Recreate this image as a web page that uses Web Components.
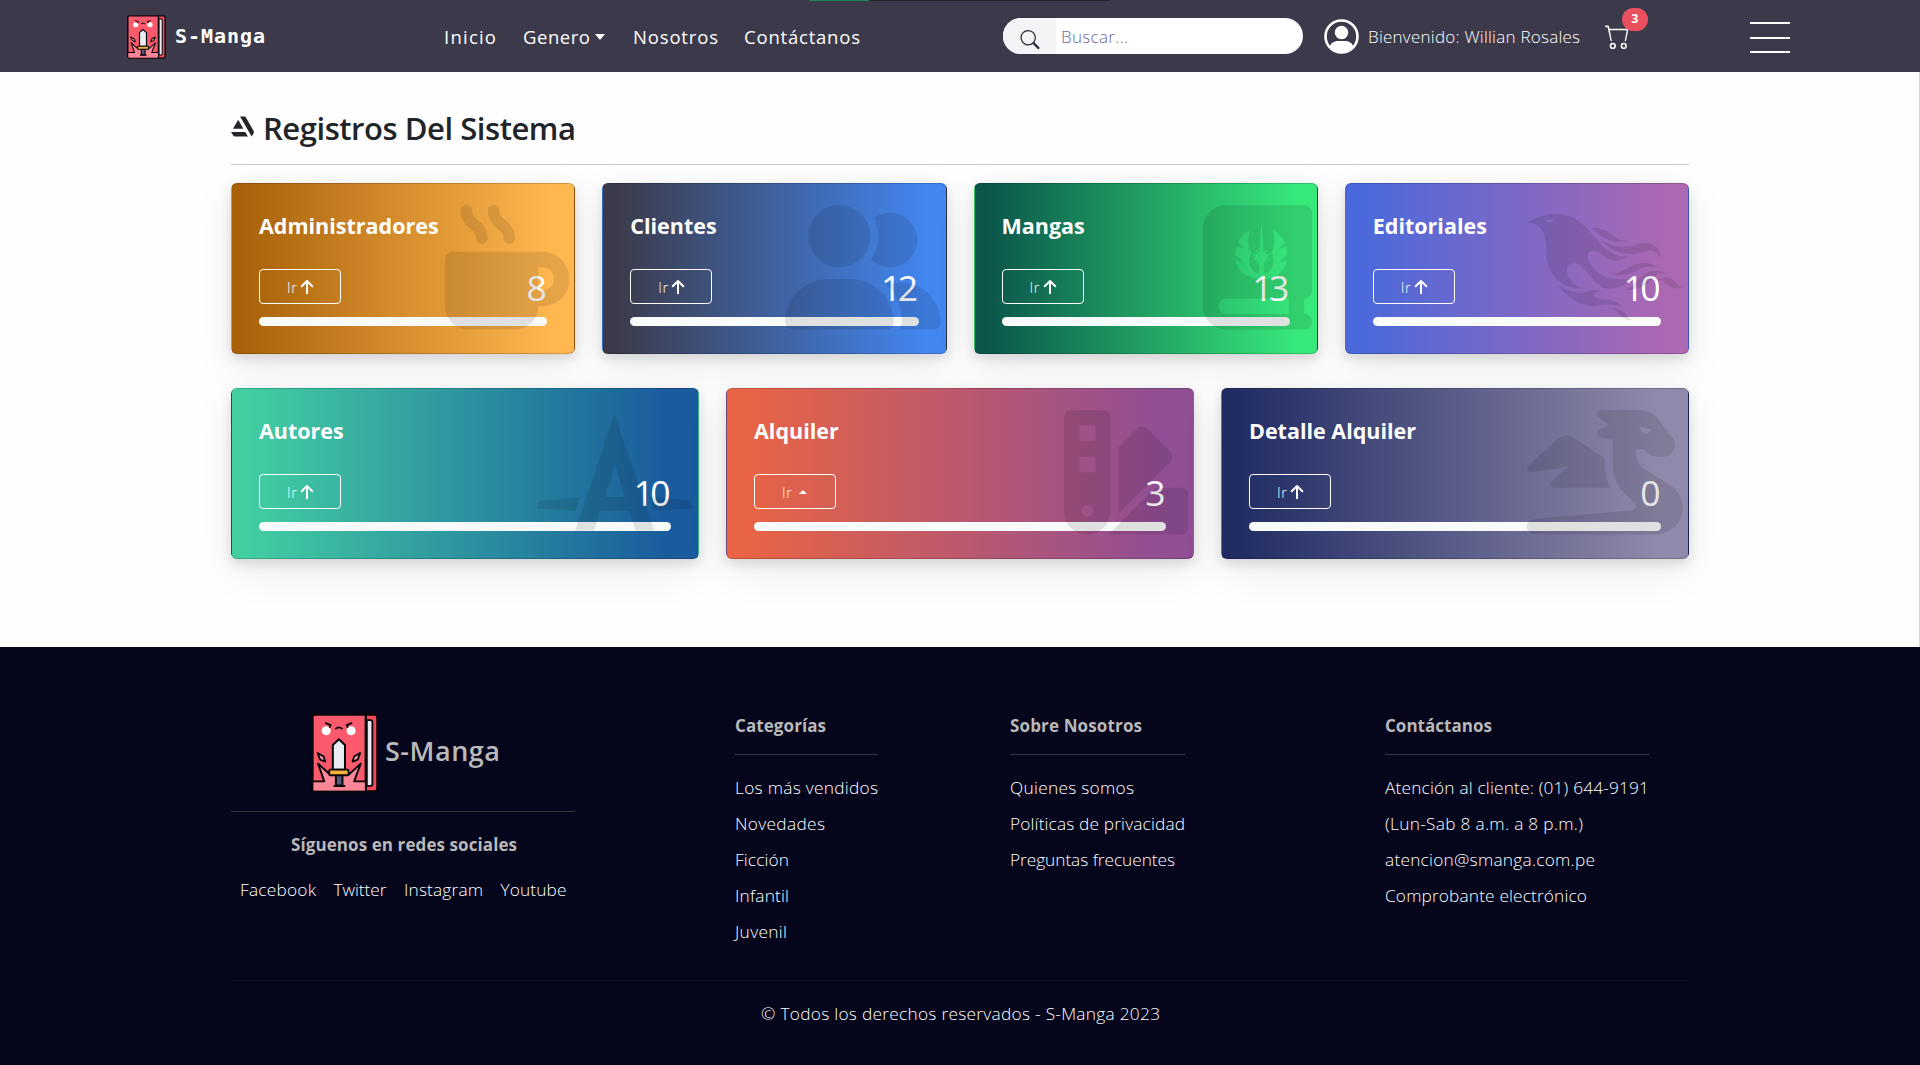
<!DOCTYPE html>
<html lang="es">
<head>
<meta charset="utf-8">
<title>S-Manga</title>
<style>
html,body{margin:0;padding:0}
body{width:1920px;height:1065px;overflow:hidden;background:#fefefe;font-family:"Open Sans","Noto Sans",sans-serif;color:#212529}
</style>
</head>
<body>
<manga-page></manga-page>
<script>
const FACE = {
  cup:[512,'M88 0C74.7 0 64 10.7 64 24c0 38.9 23.4 59.4 39.1 73.1l1.1 1C120.5 112.3 128 119.9 128 136c0 13.3 10.7 24 24 24s24-10.7 24-24c0-38.9-23.4-59.4-39.1-73.1l-1.1-1C119.5 47.7 112 40.1 112 24c0-13.3-10.7-24-24-24zM32 192c-17.7 0-32 14.3-32 32V416c0 53 43 96 96 96H288c53 0 96-43 96-96h16c61.9 0 112-50.1 112-112s-50.1-112-112-112H352 32zm352 64h16c26.5 0 48 21.5 48 48s-21.5 48-48 48H384V256zM224 24c0-13.3-10.7-24-24-24s-24 10.7-24 24c0 38.9 23.4 59.4 39.1 73.1l1.1 1C232.5 112.3 240 119.9 240 136c0 13.3 10.7 24 24 24s24-10.7 24-24c0-38.9-23.4-59.4-39.1-73.1l-1.1-1C231.5 47.7 224 40.1 224 24z'],
  users:[640,'M96 128a128 128 0 1 1 256 0A128 128 0 1 1 96 128zM0 482.3C0 383.8 79.8 304 178.3 304h91.4C368.2 304 448 383.8 448 482.3c0 16.4-13.3 29.7-29.7 29.7H29.7C13.3 512 0 498.7 0 482.3zM609.3 512H471.4c5.4-9.4 8.6-20.3 8.6-32v-8c0-60.7-27.1-115.2-69.8-151.8c2.4-.1 4.7-.2 7.1-.2h61.4C567.8 320 640 392.2 640 481.3c0 17-13.8 30.7-30.7 30.7zM432 256c-31 0-59-12.6-79.3-32.9C372.4 196.5 384 163.6 384 128c0-26.8-6.6-52.1-18.3-74.3C384.3 40.1 407.2 32 432 32c61.9 0 112 50.1 112 112s-50.1 112-112 112z'],
  book:[448,'M96 0C43 0 0 43 0 96V416c0 53 43 96 96 96H384h32c17.7 0 32-14.3 32-32s-14.3-32-32-32V384c17.7 0 32-14.3 32-32V32c0-17.7-14.3-32-32-32H384 96zm0 384H352v64H96c-17.7 0-32-14.3-32-32s14.3-32 32-32zM240 74l-8 94-1 26-15-11 8 18-23-1 17 14-17 15 22-3-9 20 15-13 2 27-3 22c-26-8-38-30-38-52 0-15 6-26 10-36-16-16-20-46-7-92-24 16-42 34-50 52l28 27-32-10c-4 12-6 24-5 36l38 32-37-12c8 48 50 78 105 78 55 0 97-30 105-78l-37 12 38-32c1-12-1-24-5-36l-32 10 28-27c-8-18-26-36-50-52 13 46 9 76-7 92 4 10 10 21 10 36 0 22-12 44-38 52l-3-22 2-27 15 13-9-20 22 3-17-15 17-14-23 1 8-18-15 11-1-26z'],
  bird:[640,'M212.9 344.3c3.8-.1 22.8-1.4 25.6-2.2-2.4-2.6-43.6-1-68-49.6-4.3-8.6-7.5-17.6-6.4-27.6 2.9-25.5 32.9-30 52-18.5 36 21.6 63.3 91.3 113.7 97.5 37 4.5 84.6-17 108.2-45.4-.6-.1-.8-.2-1-.1-.4.1-.8.2-1.1.3-33.3 12.1-94.3 9.7-134.7-14.8-37.6-22.8-53.1-58.7-51.8-74.6 1.8-21.3 22.9-23.2 35.9-19.6 14.4 3.9 24.4 17.6 38.9 27.4 15.6 10.4 32.9 13.7 51.3 10.3 14.9-2.7 34.4-12.3 36.5-14.5-1.1-.1-1.8-.1-2.5-.2-6.2-.6-12.4-.8-18.5-1.7C279.8 194.5 262.1 47.4 138.5 37.9 94.2 34.5 39.1 46 2.2 72.9c-.8.6-1.5 1.2-2.2 1.8.1.2.1.3.2.5.8 0 1.6-.1 2.4-.2 6.3-1 12.5-.8 18.7.3 23.8 4.3 47.7 23.1 55.9 76.5 5.3 34.3-.7 50.8 8 86.1 19 77.1 91 107.6 127.7 106.4zM75.3 64.9c-.9-1-.9-1.2-1.3-2 12.1-2.6 24.2-4.1 36.6-4.8-1.1 14.7-22.2 21.3-35.3 6.8zm196.9 350.5c-42.8 1.2-92-26.7-123.5-61.4-4.6-5-16.8-20.2-18.6-23.4l.4-.4c6.6 4.1 25.7 18.6 54.8 27 24.2 7 48.1 6.3 71.6-3.3 22.7-9.3 41-.5 43.1 2.9-18.5 3.8-20.1 4.4-24 7.9-5.1 4.4-4.6 11.7 7 17.2 26.2 12.4 63-2.8 97.2 25.4 2.4 2 8.1 7.8 10.1 10.7-.1.2-.3.3-.4.5-4.8-1.5-16.4-7.5-40.2-9.3-24.7-2-46.3 5.3-77.5 6.2zm174.8-252c16.4-5.2 41.3-13.4 66.5-3.3 16.1 6.5 26.2 18.7 32.1 34.6 3.5 9.4 5.1 19.7 5.1 28.7-.2 0-.4 0-.6.1-.2-.4-.4-.9-.5-1.3-5-22-29.9-43.8-67.6-29.9-50.2 18.6-130.4 9.7-176.9-48-.7-.9-2.4-1.7-1.3-3.2.1-.2 2.1.6 3 1.3 18.1 13.4 38.3 21.9 60.3 26.2 30.5 6.1 54.6 2.9 79.9-5.2zm102.7 117.5c-32.4.2-33.8 50.1-103.6 64.4-18.2 3.7-38.7 4.6-44.9 4.2v-.4c2.8-1.5 14.7-2.6 29.7-16.6 7.9-7.3 15.3-15.1 22.8-22.9 19.5-20.2 41.4-42.2 81.9-39 23.1 1.8 29.3 8.2 36.1 12.7.3.2.4.5.7.9-.5 0-.7.1-.9 0-7-2.7-14.3-3.3-21.8-3.3zm-12.3-24.1c-.1.2-.1.4-.2.6-28.9-4.4-48-7.9-68.5 4-17 9.9-31.4 20.5-62 24.4-27.1 3.4-45.1 2.4-66.1-8-.3-.2-.6-.4-1-.6 0-.2.1-.3.1-.5 24.9 3.8 36.4 5.1 55.5-5.8 22.3-12.9 40.1-26.6 71.3-31 29.6-4.1 51.3 2.5 70.9 16.9zM268.6 97.3c-.6-.6-1.1-1.2-2.1-2.3 7.6 0 29.7-1.2 53.4 8.4 19.7 8 32.2 21 50.2 32.9 11.1 7.3 23.4 9.3 36.4 8.1 4.3-.4 8.5-1.2 12.8-1.7.4-.1.9 0 1.5.3-.6.4-1.2.9-1.8 1.2-8.1 4-16.7 6.3-25.6 7.1-26.1 2.6-50.3-3.7-73.4-15.4-19.3-9.9-36.4-22.9-51.4-38.6zM640 335.7c-3.5 3.1-22.7 11.6-42.7 5.3-12.3-3.9-19.5-14.9-31.6-24.1-10-7.6-20.9-7.9-28.1-8.4.6-.8.9-1.2 1.2-1.4 14.8-9.2 30.5-12.2 47.3-6.5 12.5 4.2 19.2 13.5 30.4 24.2 10.8 10.4 21 9.9 23.1 10.5.1-.1.2 0 .4.4zm-212.5 137c2.2 1.2 1.6 1.5 1.5 2-18.5-1.4-33.9-7.6-46.8-22.2-21.8-24.7-41.7-27.9-48.6-29.7.5-.2.8-.4 1.1-.4 13.1.1 26.1.7 38.9 3.9 25.3 6.4 35 25.4 41.6 35.3 3.2 4.8 7.3 8.3 12.3 11.1z'],
  prefixer:[640,'M318.4 16l-161 480h77.5l25.4-81.4h119.5L405 496h77.5L318.4 16zm-40.3 341.9l41.2-130.4h1.5l40.9 130.4h-83.6zM640 405l-10-31.4L462.1 358l19.4 56.5L640 405zm-462.1-47L10 373.7 0 405l158.5 9.4 19.4-56.4z'],
  swatch:[512,'M0 32C0 14.3 14.3 0 32 0H160c17.7 0 32 14.3 32 32V416c0 53-43 96-96 96s-96-43-96-96V32zM223.6 425.9c.3-3.3 .4-6.6 .4-9.9V154l75.4-75.4c12.5-12.5 32.8-12.5 45.3 0l90.5 90.5c12.5 12.5 12.5 32.8 0 45.3L223.6 425.9zM182.8 512l192-192H480c17.7 0 32 14.3 32 32V480c0 17.7-14.3 32-32 32H182.8zM128 64H64v64h64V64zM64 192v64h64V192H64zM96 440a24 24 0 1 0 0-48 24 24 0 1 0 0 48z'],
  dragon:[640,'M352 124.5l-51.9-13c-6.5-1.6-11.3-7.1-12-13.8s2.8-13.1 8.7-16.1l40.8-20.4L294.4 28.8c-5.5-4.1-7.8-11.3-5.6-17.9S297.1 0 304 0H416h32 16c30.2 0 58.7 14.2 76.8 38.4l57.6 76.8c6.2 8.3 9.6 18.4 9.6 28.8c0 26.5-21.5 48-48 48H538.5c-17 0-33.3-6.7-45.3-18.7L480 160H448v21.5c0 24.8 12.8 47.9 33.8 61.1l106.6 66.6c32.1 20.1 51.6 55.2 51.6 93.1C640 462.9 590.9 512 530.2 512H496 432 32.3c-3.3 0-6.6-.4-9.6-1.4C13.5 507.8 6 501 2.4 492.1C1 488.7 .2 485.2 0 481.4c-.2-3.7 .3-7.3 1.3-10.7c2.8-9.2 9.6-16.7 18.6-20.4c3-1.2 6.2-2 9.5-2.2L433.3 412c8.3-.7 14.7-7.7 14.7-16.1c0-4.3-1.7-8.4-4.7-11.4l-44.4-44.4c-30-30-46.9-70.7-46.9-113.1V181.5v-57zM464.3 68.1c-.2 1.3-.3 2.6-.3 3.9c0 13.3 10.7 24 24 24c10.6 0 19.5-6.8 22.7-16.3zM130.9 116.5c16.3-14.5 40.4-16.2 58.5-4.1l130.6 87V227c0 32.8 8.4 64.8 24 93H112c-6.7 0-12.7-4.2-15-10.4s-.5-13.3 4.6-17.7L171 232.3 18.4 255.8c-7 1.1-13.9-2.6-16.9-9s-1.5-14.1 3.8-18.8L130.9 116.5z']
};

const define = (name, html, setup) => customElements.define(name, class extends HTMLElement {
  constructor(){ super(); this.attachShadow({mode:'open'}); }
  connectedCallback(){
    if (this.ready) return;
    this.ready = true;
    this.shadowRoot.innerHTML = typeof html === 'function' ? html(this) : html;
    if (setup) setup(this);
  }
});

/* Text run set to a given width through letter spacing */
const runs = new Set();
define('fit-text', `<style>:host{display:block;white-space:nowrap;flex:none}span{display:inline-block}</style><span><slot></slot></span>`, el => runs.add(el));
const fitAll = () => runs.forEach(el => {
  const w = +el.getAttribute('w'), n = el.textContent.trim().length;
  const s = el.shadowRoot.querySelector('span');
  const nat = s.getBoundingClientRect().width;
  el.style.width = w + 'px';
  if (n > 1) s.style.letterSpacing = ((w + 1 - nat) / (n - 1)).toFixed(3) + 'px';
});

define('manga-logo', `<style>:host{display:block;flex:none}svg{display:block;width:100%;height:100%}</style>
<svg viewBox="0 0 67 79" preserveAspectRatio="none" stroke-linejoin="round" stroke-linecap="round">
<path d="M53 1.5h9.500q3 0 3 3v70q0 3-3 3H53z" fill="#f4495a" stroke="#07060b" stroke-width="2.400"/>
<path d="M55 7h3.500q2 0 2 2v61q0 2-2 2H55z" fill="#e9edf5" stroke="#07060b" stroke-width="1.800"/>
<path d="M4 1.500h50v76H4q-2.600 0-2.600-2.600V4Q1.400 1.500 4 1.500z" fill="#fb5a6c" stroke="#07060b" stroke-width="2.400"/>
<path d="M2.500 67.500H13L7 50l12 11h18l11-11-6 17.500h11v9H2.500z" fill="#fd8796"/>
<path d="M2 67.500h11L7 50l12 11M37 61l12-11-6.500 17.500H53" fill="none" stroke="#07060b" stroke-width="1.900"/>
<path d="M6.500 39.500l6 3.500 1.500 5-5-2zM48.500 39.500l-6 3.500-1.500 5 5-2z" fill="#fda0ab" stroke="#07060b" stroke-width="1.800"/>
<circle cx="15" cy="17.500" r="4.500" fill="#fff"/><circle cx="39.500" cy="17.500" r="4.500" fill="#fff"/>
<path d="M14.500 10l5 2M18.500 11.500v2.500M40 10l-5 2M36 11.500v2.500M24.500 15.500q3-2.800 6 0" fill="none" stroke="#07060b" stroke-width="1.700"/>
<path d="M21.500 56V31.500L27.500 26l6 5.500V56z" fill="#e9edf2" stroke="#07060b" stroke-width="2"/>
<path d="M24.500 61h6.500v10.500h-6.500z" fill="#55587a" stroke="#07060b" stroke-width="1.900"/>
<path d="M23 72h10" stroke="#07060b" stroke-width="2"/>
<rect x="18" y="56" width="19" height="5.500" rx="1" fill="#f9b03d" stroke="#07060b" stroke-width="1.800"/>
</svg>`);

define('nav-bar', `<style>
:host{display:flex;height:72px;background:#3c394a;color:#fff;align-items:center;position:relative;font-size:19px;line-height:34px}
manga-logo{width:39px;height:44px;margin-left:127px;margin-top:1px}
.brand{font:bold 20px/36px "DejaVu Sans Mono",monospace;margin-left:9px}
nav{display:flex;margin-left:180px;align-items:center;font-size:18.500px;padding-top:2px}
.c{width:0;border:5px solid transparent;border-top:6px solid #fff;border-bottom:0;margin:0 28px 0 6px}
.search{display:flex;margin-left:144px;width:300px;height:36px;border-radius:18px;background:#fff;overflow:hidden;font-size:17px;font-weight:300;color:#6f6a99}
.search i{width:53px;background:#f3f4f6;display:block}
.search svg{display:block;margin:12px 0 0 17px}
.search fit-text{margin:2px 0 0 5px}
.u{margin-left:21px}.n{margin-left:9px;font-weight:300;font-size:17px;padding-top:2px}
.cart{position:relative;margin-left:26px;width:25px;height:24px}
.cart svg{display:block}
.cart b{position:absolute;left:17px;top:-16px;width:26px;height:23px;border-radius:12px;background:#e8515d;font-size:12px;line-height:22px;text-align:center}
.m{margin-left:120px;width:40px;display:flex;flex-direction:column;gap:12.500px;padding-top:3px}
.m i{height:2px;background:#fff}
.p{position:absolute;left:809px;top:0;width:301px;height:1px;background:linear-gradient(90deg,#198754 60px,#222529 60px)}
</style>
<manga-logo></manga-logo><fit-text class="brand" w="89">S-Manga</fit-text>
<nav><fit-text w="51">Inicio</fit-text><fit-text w="66" style="margin-left:28px">Genero</fit-text><span class="c"></span><fit-text w="84">Nosotros</fit-text><fit-text w="115" style="margin-left:27px">Contáctanos</fit-text></nav>
<div class="search"><i><svg width="20" height="19" viewBox="0 0 16 16" fill="#2c2a3a"><path d="M11.742 10.344a6.500 6.500 0 1 0-1.397 1.398h-.001c.03.04.062.078.098.115l3.850 3.850a1 1 0 0 0 1.415-1.414l-3.850-3.850a1.007 1.007 0 0 0-.115-.1zM12 6.500a5.500 5.500 0 1 1-11 0 5.500 5.500 0 0 1 11 0z"/></svg></i><fit-text w="66">Buscar...</fit-text></div>
<svg class="u" width="35" height="35" viewBox="0 0 35 35"><defs><clipPath id="k"><circle cx="17.500" cy="17.500" r="16"/></clipPath></defs><circle cx="17.500" cy="17.500" r="16" fill="none" stroke="#fff" stroke-width="2.600"/><circle cx="17.500" cy="13.500" r="6.700" fill="#fff"/><path clip-path="url(#k)" d="M5 30c1-6 5-8 9-8h7c4 0 8 2 9 8l-3 5H8z" fill="#fff"/></svg>
<fit-text class="n" w="211">Bienvenido: Willian Rosales</fit-text>
<div class="cart"><svg width="25" height="25" viewBox="0 0 16 16" fill="#fff"><path d="M0 1.500A.5.500 0 0 1 .5 1H2a.5.500 0 0 1 .485.379L2.890 3H14.500a.5.500 0 0 1 .49.598l-1.500 7A.5.500 0 0 1 13 11H4a.5.500 0 0 1-.491-.408L2.010 3.607 1.610 2H.5a.5.500 0 0 1-.5-.5zM3.102 4l1.313 7h8.170l1.313-7H3.102zM5 12a2 2 0 1 0 0 4 2 2 0 0 0 0-4zm7 0a2 2 0 1 0 0 4 2 2 0 0 0 0-4zm-7 1a1 1 0 1 1 0 2 1 1 0 0 1 0-2zm7 0a1 1 0 1 1 0 2 1 1 0 0 1 0-2z"/></svg><b>3</b></div>
<div class="m"><i></i><i></i><i></i></div><div class="p"></div>`);

define('stat-card', el => {
  const a = k => el.getAttribute(k), [w, d] = FACE[a('icon')];
  const mark = a('mark') === 'caret'
    ? '<svg width="16" height="16"><path d="M5 10l4-4 4 4z" fill="#fff"/></svg>'
    : '<svg width="16" height="16" fill="none" stroke="#fff" stroke-width="2" stroke-linecap="round" stroke-linejoin="round"><path d="M8 14.300V2.200M2.700 7.300L8 2l5.300 5.300"/></svg>';
  return `<style>
:host{display:block;flex:1 1 0;box-sizing:border-box;height:171px;border:1px solid rgba(0,0,0,.175);border-radius:6px;background:linear-gradient(90deg,${a('from')} 3%,${a('to')} 94%);box-shadow:0 5px 12px rgba(0,0,0,.12),0 12px 42px rgba(0,0,0,.08);position:relative;padding:27px 27px 0;color:#fff}
.t{font-size:21.500px;line-height:30px;font-weight:700}
.r{display:flex;justify-content:space-between;align-items:center;height:35px;margin-top:28px}
.b{box-sizing:border-box;width:82px;height:35px;border:1px solid #fff;border-radius:4px;display:flex;align-items:center;padding:1px 0 0 27px;font-size:14.500px;font-weight:300;gap:3px}
.n{font-size:35.500px;line-height:35px;letter-spacing:-3.500px;padding:2px 4px 0 0}
.l{height:9px;border-radius:5px;background:#f9fbfb;margin-top:13px}
.i{position:absolute;right:5px;top:21px;fill:rgba(0,0,0,.1)}
</style><fit-text class="t" w="${a('w')}"><slot></slot></fit-text>
<div class="r"><span class="b"><fit-text w="9">Ir</fit-text>${mark}</span><span class="n">${a('n')}</span></div>
<div class="l"></div><svg class="i" width="${w*124.500/512}" height="124.500" viewBox="0 0 ${w} 512" fill-rule="${a('icon')==='book'?'evenodd':'nonzero'}"><path d="${d}"/></svg>`;
});

define('stat-board', `<style>
:host{display:block;box-sizing:border-box;height:575px;padding:32px 230px 0 231px;border-right:1px solid #d3d5d6}
h1{margin:0;display:flex;height:48px;align-items:center;gap:9px;font-size:31px;line-height:48px;font-weight:600;color:#212529}
h1 svg{margin-top:-4px}
hr{margin:12px 0 18px;border:0;height:1px;background:#c8cccc}
.row{display:flex;gap:27px}.row+.row{margin-top:34px}
</style>
<h1><svg width="23" height="23" viewBox="0 0 512 512" fill="#212529"><path d="M2 377.400l43 74.300A51.350 51.350 0 0 0 90.900 480h285.400l-59.200-102.600zM501.800 350L335.600 59.300A51.380 51.380 0 0 0 290.200 32h-88.400l257.300 447.600 40.700-70.500c1.900-3.200 21-29.700 2-59.100zM275 304.500l-115.500-200L44 304.500z"/></svg><fit-text w="312">Registros Del Sistema</fit-text></h1>
<hr>
<div class="row">
<stat-card from="#aa620a" to="#ffb750" icon="cup" n="8" w="178">Administradores</stat-card>
<stat-card from="#3c3a49" to="#4286f0" icon="users" n="12" w="85">Clientes</stat-card>
<stat-card from="#0b554b" to="#37e87a" icon="book" n="13" w="84">Mangas</stat-card>
<stat-card from="#4969dc" to="#ac68b2" icon="bird" n="10" w="113">Editoriales</stat-card>
</div>
<div class="row">
<stat-card from="#43cea2" to="#195b9d" icon="prefixer" n="10" w="84">Autores</stat-card>
<stat-card from="#e96443" to="#904e95" icon="swatch" n="3" mark="caret" w="86">Alquiler</stat-card>
<stat-card from="#202c63" to="#9089ab" icon="dragon" n="0" w="168">Detalle Alquiler</stat-card>
</div>`);

define('link-column', `<style>
:host{display:block}
h2{margin:0;font-size:17px;line-height:26px;font-weight:700;color:#b9b9b9}
hr{border:0;height:1px;background:#36363f;margin:15px 0 15px}
.k{font-weight:300;font-size:17.300px;line-height:36px;color:#fff}
</style><h2><slot name="head"></slot></h2><hr><div class="k"><slot></slot></div>`);

define('site-footer', `<style>
:host{display:block;box-sizing:border-box;height:418px;background:#05051c;color:#fff;padding:0 231px}
.top{display:flex;height:333px;align-items:flex-start}
.a{width:344px;padding-top:66px}
.l{display:flex;align-items:center;gap:6px;padding-left:80px}
.l manga-logo{width:68px;height:80px}
.l fit-text{font-size:27px;font-weight:600;color:#b9b9b9;line-height:40px;padding-bottom:4px}
hr{border:0;height:1px;background:#36363f;margin:18px 0 0}
.s{font-size:17px;font-weight:700;color:#b9b9b9;line-height:26px;margin:20px 0 0 60px}
.n{display:flex;gap:18.500px;margin:14px 0 0 9px;font-weight:300;font-size:17.300px;line-height:36px}
link-column{margin-top:66px;flex:none}
.e{height:1px;background:#0e0e22}
.c{font-weight:300;font-size:17.300px;line-height:36px;display:flex;justify-content:center;padding-top:15px}
</style>
<div class="top">
<div class="a"><div class="l"><manga-logo></manga-logo><fit-text w="114">S-Manga</fit-text></div><hr>
<fit-text class="s" w="225">Síguenos en redes sociales</fit-text>
<div class="n"><fit-text w="75">Facebook</fit-text><fit-text w="52">Twitter</fit-text><fit-text w="78">Instagram</fit-text><fit-text w="65">Youtube</fit-text></div></div>
<link-column style="width:143px;margin-left:160px"><fit-text slot="head" w="90">Categorías</fit-text><fit-text w="142">Los más vendidos</fit-text><fit-text w="89">Novedades</fit-text><fit-text w="53">Ficción</fit-text><fit-text w="53">Infantil</fit-text><fit-text w="51">Juvenil</fit-text></link-column>
<link-column style="width:175px;margin-left:132px"><fit-text slot="head" w="131">Sobre Nosotros</fit-text><fit-text w="123">Quienes somos</fit-text><fit-text w="174">Políticas de privacidad</fit-text><fit-text w="164">Preguntas frecuentes</fit-text></link-column>
<link-column style="width:264px;margin-left:200px"><fit-text slot="head" w="106">Contáctanos</fit-text><fit-text w="263">Atención al cliente: (01) 644-9191</fit-text><fit-text w="197">(Lun-Sab 8 a.m. a 8 p.m.)</fit-text><fit-text w="209">atencion@smanga.com.pe</fit-text><fit-text w="201">Comprobante electrónico</fit-text></link-column>
</div><div class="e"></div><div class="c"><fit-text w="398">© Todos los derechos reservados - S-Manga 2023</fit-text></div>`);

define('manga-page', `<style>:host{display:block}</style><nav-bar></nav-bar><stat-board></stat-board><site-footer></site-footer>`);
fitAll();
</script>
</body>
</html>
